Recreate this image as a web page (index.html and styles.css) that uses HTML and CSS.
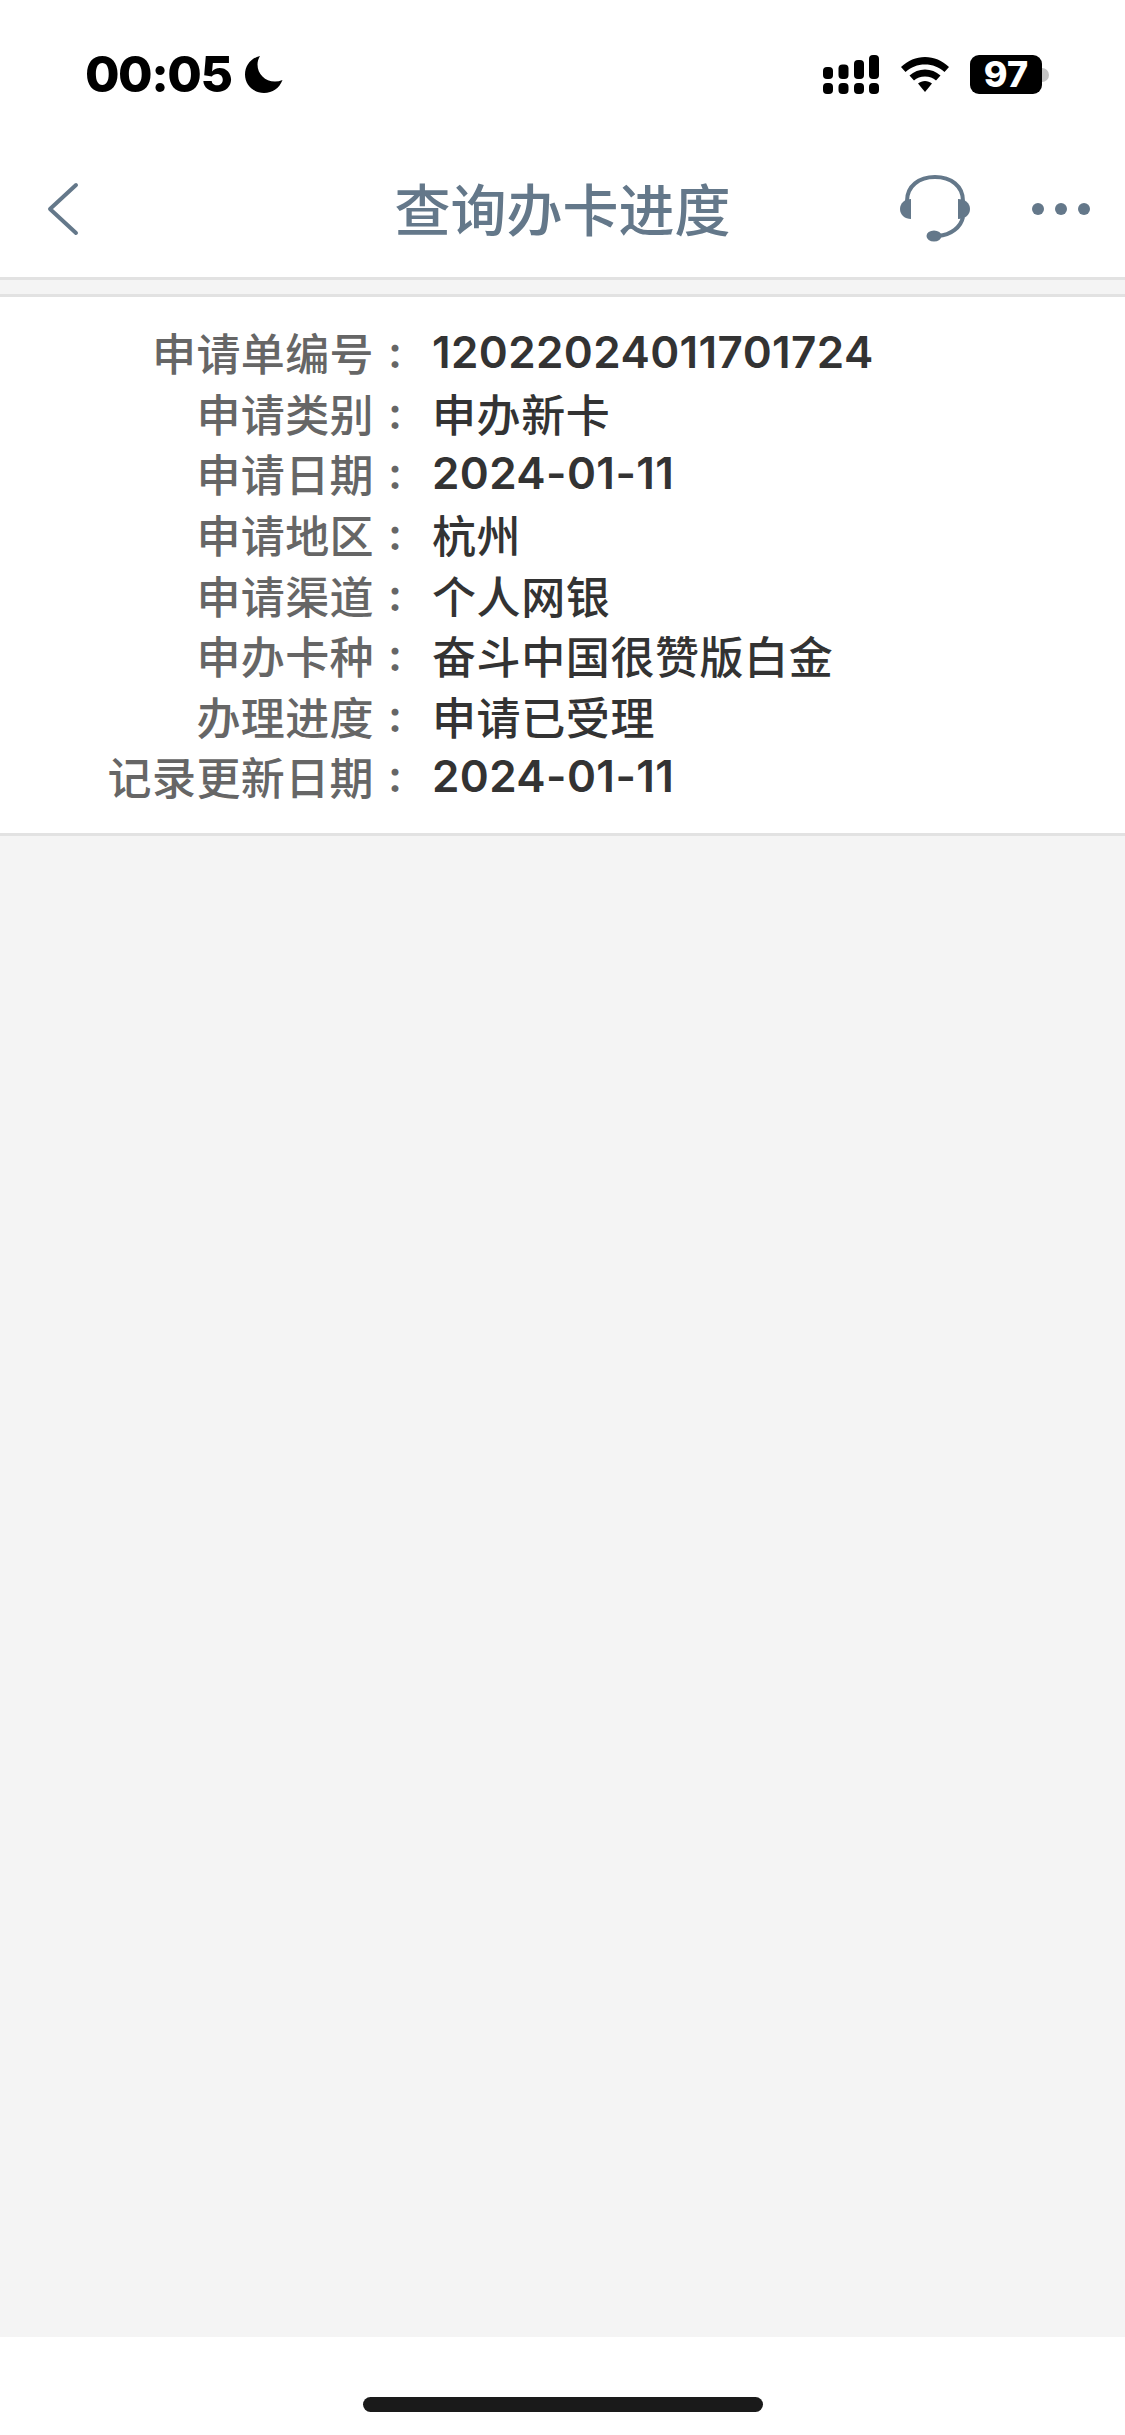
FILE: index.html
```html
<!DOCTYPE html>
<html lang="zh-CN">
<head>
    <meta charset="UTF-8">
    <meta name="viewport" content="width=device-width, initial-scale=1.0">
    <title>查询办卡进度</title>
    <link rel="stylesheet" href="styles.css">
</head>
<body>
    <div class="page">
        <!-- Status bar -->
        <div class="status-bar">
            <div class="status-left">
                <span class="time">00:05</span>
                <svg class="moon" width="38" height="37" viewBox="0 0 38 37">
                    <path d="M15 0C6 2 0 9.500 0 18.500 0 29 8.500 37 19 37 27.500 37 34.500 32 37.500 24 35 25 32.500 25.500 30 25.500 20 25.500 12.500 18 12.500 8.500 12.500 5.500 13.500 2.500 15 0Z" fill="#000"/>
                </svg>
            </div>
            <div class="status-right">
                <svg class="signal" width="56" height="39" viewBox="0 0 56 39">
                    <rect x="0" y="12" width="10" height="12" rx="4"/>
                    <rect x="15.500" y="9.500" width="10" height="14.500" rx="4"/>
                    <rect x="31" y="5" width="10" height="19" rx="4"/>
                    <rect x="46" y="0" width="10" height="24" rx="4"/>
                    <rect x="0" y="28" width="10" height="11" rx="4"/>
                    <rect x="15.500" y="28" width="10" height="11" rx="4"/>
                    <rect x="31" y="28" width="10" height="11" rx="4"/>
                    <rect x="46" y="28" width="10" height="11" rx="4"/>
                </svg>
                <svg class="wifi" width="48" height="35" viewBox="0 0 48 35">
                    <path d="M24 0C15 0 7 3.500 0 10L4.500 15C10 10 16.500 7.500 24 7.500 31.500 7.500 38 10 43.500 15L48 10C41 3.500 33 0 24 0Z"/>
                    <path d="M24 12.500C18 12.500 13 14.500 8.500 18.500L13 23.500C16 21 19.500 19.500 24 19.500 28.500 19.500 32 21 35 23.500L39.500 18.500C35 14.500 30 12.500 24 12.500Z"/>
                    <path d="M24 24C21.500 24 19 25 17 26.500L24 35 31 26.500C29 25 26.500 24 24 24Z"/>
                </svg>
                <div class="battery">
                    <span class="battery-body">97</span>
                    <span class="battery-cap"></span>
                </div>
            </div>
        </div>

        <!-- Nav bar -->
        <div class="nav-bar">
            <div class="nav-left">
                <svg width="32" height="54" viewBox="0 0 32 54">
                    <path d="M29 3L3 27 29 51" fill="none" stroke="#64788a" stroke-width="4" stroke-linecap="round" stroke-linejoin="round"/>
                </svg>
            </div>
            <h1 class="nav-title">查询办卡进度</h1>
            <div class="nav-right">
                <svg class="headset" width="70" height="68" viewBox="0 0 70 68">
                    <path d="M7 26C7 11 19 2 35 2 51 2 63 11 63 26" fill="none" stroke="#64788a" stroke-width="4"/>
                    <path d="M63 42C61 52 51 60 38 61" fill="none" stroke="#64788a" stroke-width="4"/>
                    <path d="M11 24V44C5 44 0 40 0 34 0 28 5 24 11 24Z" fill="#64788a"/>
                    <path d="M58 24V44C65 44 70 40 70 34 70 28 65 24 58 24Z" fill="#64788a"/>
                    <ellipse cx="34" cy="61" rx="7.500" ry="5.500" fill="#64788a"/>
                </svg>
                <div class="more">
                    <span class="dot"></span>
                    <span class="dot"></span>
                    <span class="dot"></span>
                </div>
            </div>
        </div>

        <!-- Content -->
        <div class="content">
            <div class="info-card">
                <div class="info-row"><span class="info-label">申请单编号</span><span class="info-colon">:</span><span class="info-value info-num">12022024011701724</span></div>
                <div class="info-row"><span class="info-label">申请类别</span><span class="info-colon">:</span><span class="info-value">申办新卡</span></div>
                <div class="info-row"><span class="info-label">申请日期</span><span class="info-colon">:</span><span class="info-value info-num">2024-01-11</span></div>
                <div class="info-row"><span class="info-label">申请地区</span><span class="info-colon">:</span><span class="info-value">杭州</span></div>
                <div class="info-row"><span class="info-label">申请渠道</span><span class="info-colon">:</span><span class="info-value">个人网银</span></div>
                <div class="info-row"><span class="info-label">申办卡种</span><span class="info-colon">:</span><span class="info-value">奋斗中国很赞版白金</span></div>
                <div class="info-row"><span class="info-label">办理进度</span><span class="info-colon">:</span><span class="info-value">申请已受理</span></div>
                <div class="info-row"><span class="info-label">记录更新日期</span><span class="info-colon">:</span><span class="info-value info-num">2024-01-11</span></div>
            </div>
        </div>

        <!-- Home indicator -->
        <div class="home-area">
            <div class="home-bar"></div>
        </div>
    </div>
</body>
</html>
```

FILE: styles.css
```css
/* Body styling */
body {
    margin: 0;
    padding: 0;
    background-color: #fff;
    font-family: Inter, "Noto Sans CJK SC", sans-serif;
}

.page {
    display: flex;
    flex-direction: column;
    height: 2435px;
}

/* Status bar */
.status-bar {
    height: 150px;
    box-sizing: border-box;
    padding: 55px 76px 0 85px;
    display: flex;
    justify-content: space-between;
    align-items: flex-start;
}

.status-left {
    display: flex;
    align-items: center;
    gap: 13px;
    height: 39px;
}

.time {
    font-size: 50px;
    font-weight: 800;
    line-height: 39px;
    color: #000;
    letter-spacing: -1.5px;
}

.status-right {
    display: flex;
    align-items: flex-start;
}

.signal {
    margin-right: 22px;
}

.wifi {
    margin-top: 2px;
    margin-right: 21px;
}

.battery {
    display: flex;
    align-items: center;
}

.battery-body {
    width: 72px;
    height: 39px;
    background-color: #000;
    border-radius: 9px;
    color: #fff;
    font-size: 36px;
    font-weight: 800;
    line-height: 39px;
    text-align: center;
}

.battery-cap {
    width: 7px;
    height: 14px;
    background-color: #c4c4c4;
    border-radius: 0 7px 7px 0;
}

/* Nav bar */
.nav-bar {
    height: 127px;
    box-sizing: border-box;
    display: grid;
    grid-template-columns: 1fr auto 1fr;
    align-items: center;
    padding: 0 35px 10px;
}

.nav-left {
    display: flex;
    align-items: center;
    padding-left: 12px;
}

.nav-title {
    margin: 6px 0 0;
    font-size: 56px;
    font-weight: 500;
    color: #64788a;
    line-height: 1.2;
}

.nav-right {
    display: flex;
    justify-content: flex-end;
    align-items: center;
    gap: 62px;
}

.more {
    display: flex;
    gap: 11px;
}

.dot {
    width: 12px;
    height: 12px;
    border-radius: 50%;
    background-color: #64788a;
}

/* Content */
.content {
    flex: 1;
    background-color: #f4f4f4;
    border-top: 3px solid #e2e2e2;
    padding-top: 14px;
}

.info-card {
    background-color: #fff;
    border-top: 3px solid #e2e2e2;
    border-bottom: 3px solid #e2e2e2;
    padding: 25px 0 26px;
}

.info-row {
    display: flex;
    align-items: center;
    height: 60.6px;
    font-size: 44px;
    font-weight: 500;
}

.info-label {
    width: 374px;
    text-align: right;
    color: #666;
    letter-spacing: 0.4px;
}

.info-colon {
    width: 58px;
    box-sizing: border-box;
    padding-left: 14px;
    color: #666;
    font-weight: 600;
}

.info-value {
    color: #333;
    letter-spacing: 0.6px;
}

.info-num {
    font-weight: 600;
    letter-spacing: 0.4px;
}

/* Home indicator */
.home-area {
    height: 98px;
    display: flex;
    justify-content: center;
    padding-top: 60px;
    box-sizing: border-box;
}

.home-bar {
    width: 400px;
    height: 15px;
    background-color: #1a1a1a;
    border-radius: 8px;
}
```
